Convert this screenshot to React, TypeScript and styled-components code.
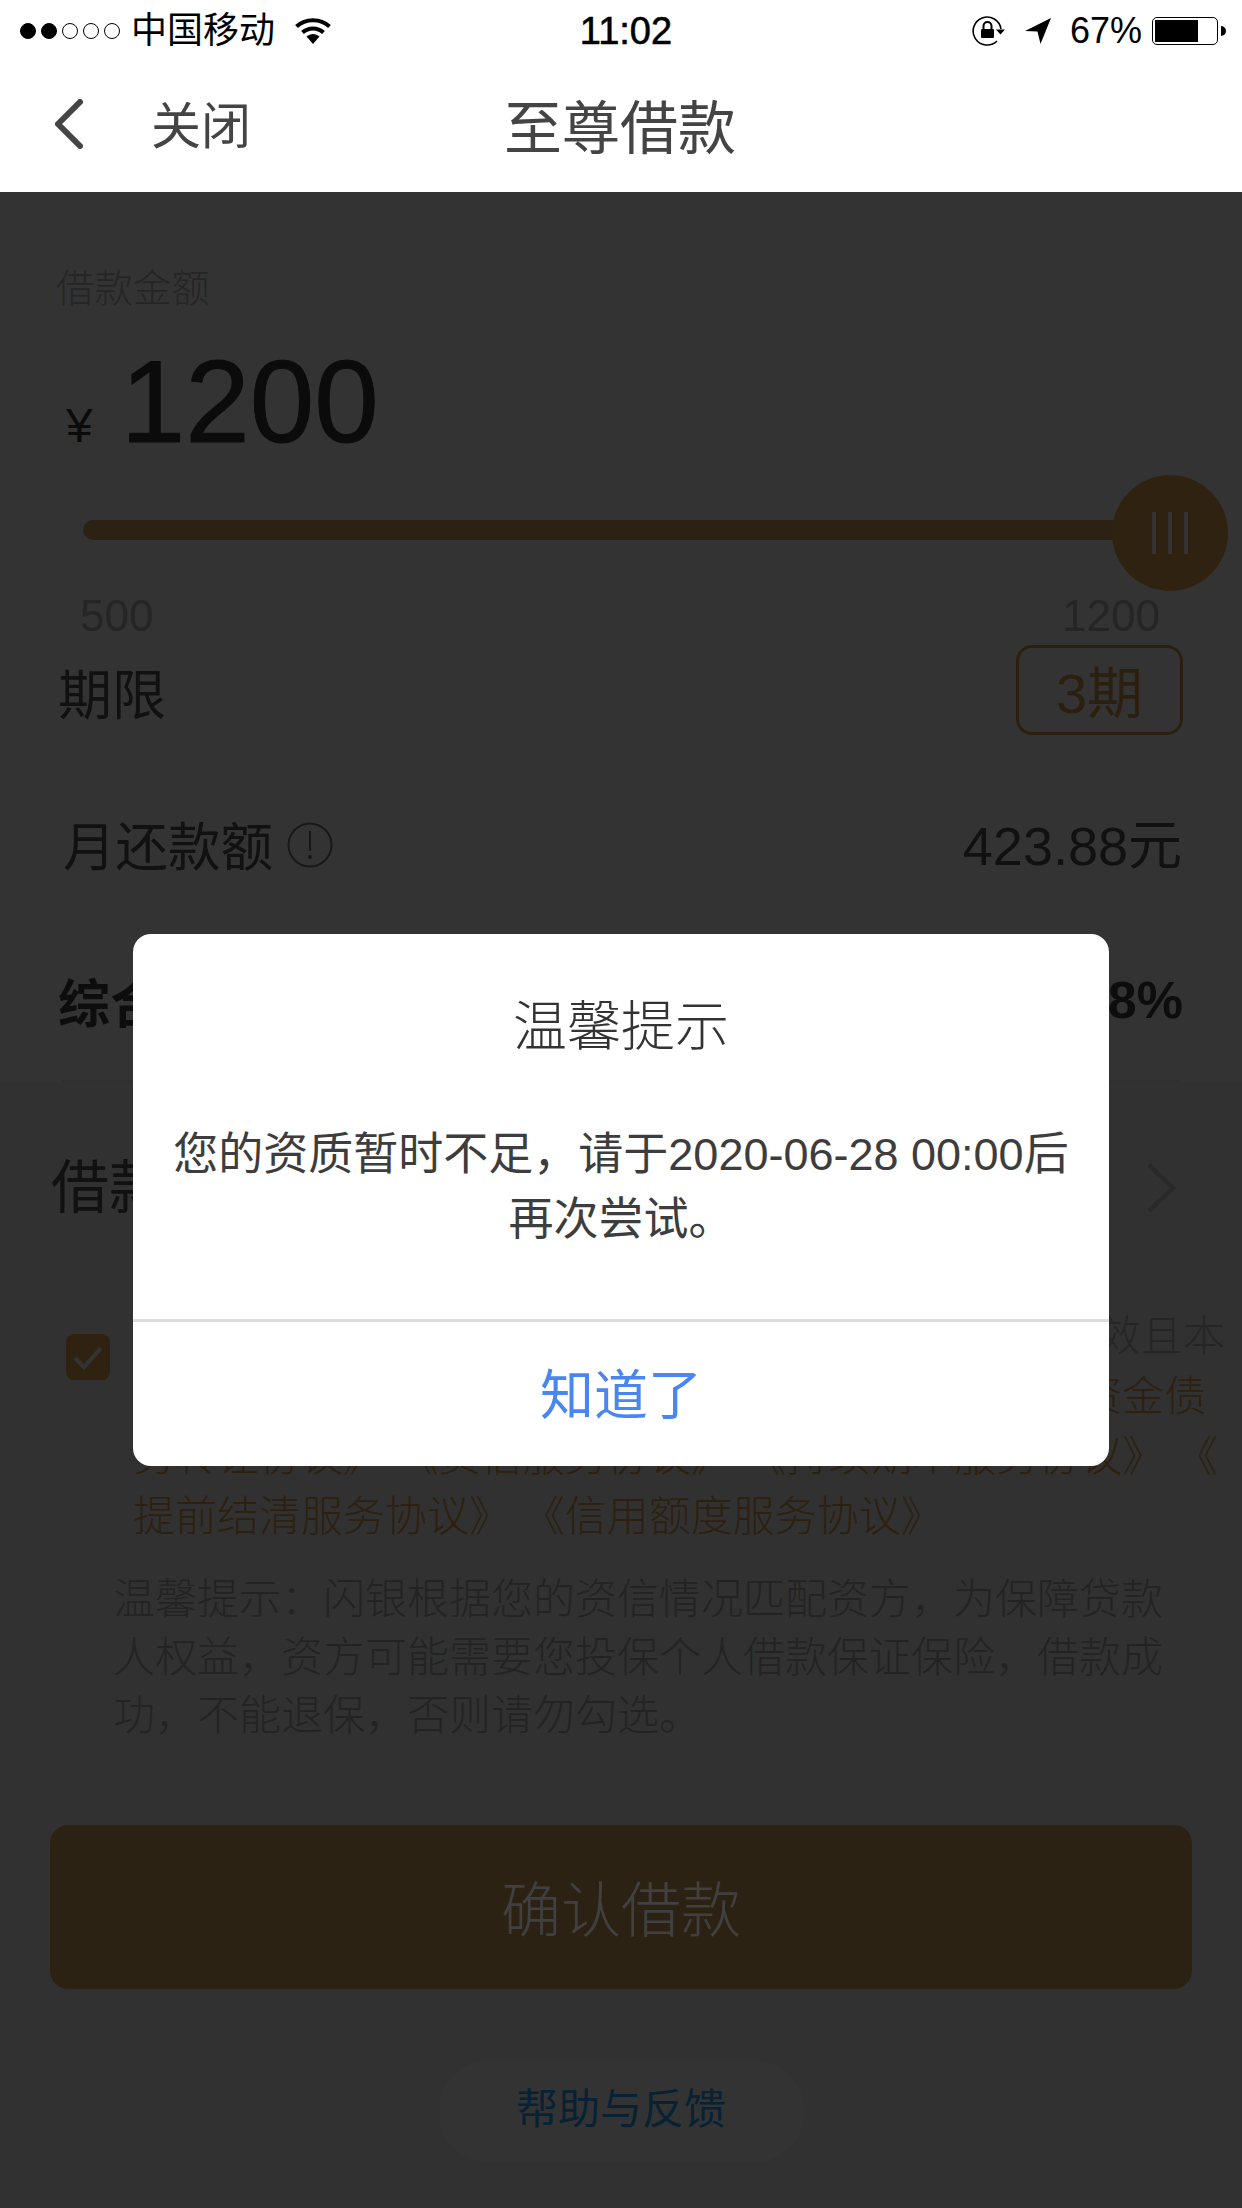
import { FC } from "react";
import styled, { createGlobalStyle } from "styled-components";

const GlobalStyle = createGlobalStyle`
  html, body {
    margin: 0;
    padding: 0;
    background: #fff;
  }
  * {
    box-sizing: border-box;
  }
`;

const App: FC = () => {
  return (
    <Page lang="zh-CN">
      <GlobalStyle />
      <StatusBar>
        <StatusLeft>
          <Signal>
            <SignalDot $on />
            <SignalDot $on />
            <SignalDot />
            <SignalDot />
            <SignalDot />
          </Signal>
          <Carrier>中国移动</Carrier>
          <svg width="36" height="28" viewBox="0 0 36 28">
            <path d="M1.5 9.5C10.5 1 25.5 1 34.5 9.5" fill="none" stroke="#000" strokeWidth="4" />
            <path d="M7.5 15.5C13.5 10 22.5 10 28.5 15.5" fill="none" stroke="#000" strokeWidth="4" />
            <path d="M11.5 19.5C15.5 16 20.5 16 24.5 19.5L18 27Z" fill="#000" />
          </svg>
        </StatusLeft>
        <Clock>11:02</Clock>
        <StatusRight>
          <svg width="36" height="30" viewBox="0 0 36 30">
            <path d="M31 13A14 14 0 1 0 27 25" fill="none" stroke="#000" strokeWidth="1.6" />
            <path d="M26 13.5H35L30.5 18.5Z" fill="#000" />
            <rect x="11" y="13" width="13" height="9" rx="1" fill="#000" />
            <path d="M13.5 13V10a4 4 0 0 1 8 0V13" fill="none" stroke="#000" strokeWidth="2" />
          </svg>
          <LocationIcon width="26" height="26" viewBox="0 0 26 26">
            <path d="M26 0L15.5 26L12.5 13.5L0 13Z" fill="#000" />
          </LocationIcon>
          <Percent>67%</Percent>
          <Battery>
            <BatteryFill />
          </Battery>
          <BatteryNub />
        </StatusRight>
      </StatusBar>

      <NavBar>
        <NavLeft>
          <svg width="28" height="50" viewBox="0 0 28 50">
            <path d="M25 3L3 25L25 47" fill="none" stroke="#444" strokeWidth="6" strokeLinecap="round" strokeLinejoin="round" />
          </svg>
          <CloseText>关闭</CloseText>
        </NavLeft>
        <NavTitle>至尊借款</NavTitle>
      </NavBar>

      <Main>
        <AmountLabel>借款金额</AmountLabel>
        <AmountRow>
          <Currency>¥</Currency>
          <AmountValue>1200</AmountValue>
        </AmountRow>
        <Slider>
          <SliderTrack />
          <SliderThumb>
            <ThumbBar />
            <ThumbBar />
            <ThumbBar />
          </SliderThumb>
        </Slider>
        <SliderScale>
          <span>500</span>
          <span>1200</span>
        </SliderScale>
        <TermRow>
          <TermLabel>期限</TermLabel>
          <TermBox>3期</TermBox>
        </TermRow>
        <InfoRow>
          <InfoName>
            <InfoText>月还款额</InfoText>
            <InfoIcon width="46" height="46" viewBox="0 0 46 46">
              <circle cx="23" cy="23" r="21.5" fill="none" stroke="#777" strokeWidth="2" />
              <path d="M23 9V29" stroke="#777" strokeWidth="2" />
              <circle cx="23" cy="35" r="2" fill="#777" />
            </InfoIcon>
          </InfoName>
          <InfoValue>423.88元</InfoValue>
        </InfoRow>
        <RateRow>
          <span>综合年化利率</span>
          <span>35.98%</span>
        </RateRow>
        <Divider />
        <LowerSection>
          <LoanRow>
            <LoanLabel>借款用途</LoanLabel>
            <svg width="30" height="50" viewBox="0 0 30 50">
              <path d="M3 2L27 25L3 48" fill="none" stroke="#ccc" strokeWidth="5" />
            </svg>
          </LoanRow>
          <Agreement>
            <CheckBox>
              <svg width="30" height="26" viewBox="0 0 30 26">
                <path d="M2 14L11 23L28 4" fill="none" stroke="#fff" strokeWidth="4" />
              </svg>
            </CheckBox>
            <AgreementText>
              <AgreementLine>本人已仔细阅读并同意以下协议，确认资料均真实有效且本</AgreementLine>
              <AgreementLine>
                人自愿接受<DocLink>《个人借款合同》 《委托担保协议》 《资金债</DocLink>
              </AgreementLine>
              <AgreementLine>
                <DocLink>务转让协议》 《资信服务协议》 《持续期本服务协议》 《</DocLink>
              </AgreementLine>
              <AgreementLine>
                <DocLink>提前结清服务协议》 《信用额度服务协议》</DocLink>
              </AgreementLine>
            </AgreementText>
          </Agreement>
          <Tip>
            温馨提示：闪银根据您的资信情况匹配资方，为保障贷款人权益，资方可能需要您投保个人借款保证保险，借款成功，不能退保，否则请勿勾选。
          </Tip>
          <ConfirmButton>
            <ConfirmLabel>确认借款</ConfirmLabel>
          </ConfirmButton>
          <HelpButton>帮助与反馈</HelpButton>
        </LowerSection>

        <Overlay>
          <Modal>
            <ModalTitle>温馨提示</ModalTitle>
            <ModalBody>
              您的资质暂时不足，请于2020-06-28 00:00后
              <br />
              再次尝试。
            </ModalBody>
            <ModalAction>知道了</ModalAction>
          </Modal>
        </Overlay>
      </Main>
    </Page>
  );
};

export default App;

const Page = styled.div`
  width: 1242px;
  height: 2208px;
  display: flex;
  flex-direction: column;
  overflow: hidden;
  font-family: "Liberation Sans", "Noto Sans CJK SC", sans-serif;
  background: #fff;
`;

const StatusBar = styled.div`
  height: 62px;
  flex: none;
  display: grid;
  grid-template-columns: 1fr auto 1fr;
  align-items: center;
  padding: 0 16px 0 20px;
  color: #000;
`;

const StatusLeft = styled.div`
  display: flex;
  align-items: center;
`;

const Signal = styled.div`
  display: flex;
  gap: 5px;
`;

const SignalDot = styled.span<{ $on?: boolean }>`
  width: 16px;
  height: 16px;
  border-radius: 50%;
  border: 1.5px solid #000;
  background: ${({ $on }) => ($on ? "#000" : "transparent")};
`;

const Carrier = styled.span`
  font-size: 36px;
  line-height: 44px;
  margin: 0 20px 0 11px;
`;

const Clock = styled.span`
  font-size: 38px;
  font-weight: 500;
  -webkit-text-stroke: 0.6px #000;
  margin-left: 6px;
`;

const StatusRight = styled.div`
  display: flex;
  align-items: center;
  justify-content: flex-end;
`;

const LocationIcon = styled.svg`
  margin-left: 19px;
`;

const Percent = styled.span`
  font-size: 36px;
  margin: 0 10px 0 19px;
`;

const Battery = styled.div`
  width: 66px;
  height: 28px;
  border: 1.5px solid #000;
  border-radius: 5px;
  padding: 2px;
`;

const BatteryFill = styled.div`
  width: 43px;
  height: 100%;
  background: #000;
`;

const BatteryNub = styled.span`
  width: 5px;
  height: 10px;
  margin-left: 3px;
  background: #000;
  border-radius: 0 5px 5px 0;
`;

const NavBar = styled.div`
  height: 130px;
  flex: none;
  position: relative;
  display: flex;
  align-items: center;
  justify-content: center;
  padding-bottom: 6px;
`;

const NavLeft = styled.div`
  position: absolute;
  left: 55px;
  top: 0;
  bottom: 6px;
  display: flex;
  align-items: center;
`;

const CloseText = styled.span`
  font-size: 50px;
  color: #444;
  margin: 0 0 4px 68px;
`;

const NavTitle = styled.div`
  font-size: 58px;
  color: #444;
  margin-left: -2px;
`;

const Main = styled.div`
  flex: 1;
  position: relative;
  background: #fff;
  display: flex;
  flex-direction: column;
`;

const AmountLabel = styled.div`
  margin: 72px 0 0 56px;
  font-size: 38.5px;
  line-height: 50px;
  font-weight: 300;
  color: #bbb;
`;

const AmountRow = styled.div`
  margin: 29px 0 0 66px;
  display: flex;
  align-items: baseline;
  height: 118px;
  line-height: 118px;
  color: #3a3a3a;
`;

const Currency = styled.span`
  font-size: 48px;
  margin-right: 28px;
`;

const AmountValue = styled.span`
  font-size: 116px;
  -webkit-text-stroke: 1px #3a3a3a;
`;

const Slider = styled.div`
  margin: 14px 14px 0 83px;
  height: 116px;
  display: flex;
  align-items: flex-start;
`;

const SliderTrack = styled.div`
  flex: 1;
  height: 20px;
  margin-top: 45px;
  background: #dca860;
  border-radius: 10px 0 0 10px;
`;

const SliderThumb = styled.div`
  width: 116px;
  height: 116px;
  flex: none;
  margin-left: -2px;
  border-radius: 50%;
  background: #e8ac50;
  display: flex;
  align-items: center;
  justify-content: center;
  gap: 12px;
`;

const ThumbBar = styled.span`
  width: 4px;
  height: 42px;
  background: #fff;
`;

const SliderScale = styled.div`
  display: flex;
  justify-content: space-between;
  padding: 0 82px 0 80px;
  font-size: 44px;
  line-height: 50px;
  color: #b8b8b8;
`;

const TermRow = styled.div`
  margin-top: 4px;
  padding: 0 59px 0 58px;
  display: flex;
  align-items: center;
  justify-content: space-between;
`;

const TermLabel = styled.span`
  margin-top: 3px;
  font-size: 54px;
  color: #555;
`;

const TermBox = styled.div`
  width: 167px;
  height: 90px;
  padding-bottom: 4px;
  border: 3px solid #d8a050;
  border-radius: 16px;
  display: flex;
  align-items: center;
  justify-content: center;
  font-size: 56px;
  color: #d8a050;
`;

const InfoRow = styled.div`
  margin-top: 70px;
  height: 80px;
  padding: 0 60px 0 63px;
  display: flex;
  align-items: center;
  justify-content: space-between;
`;

const InfoName = styled.span`
  display: flex;
  align-items: center;
`;

const InfoText = styled.span`
  font-size: 52.5px;
  color: #555;
  padding-bottom: 4px;
`;

const InfoIcon = styled.svg`
  margin-left: 14px;
`;

const InfoValue = styled.span`
  font-size: 54px;
  color: #555;
  padding-bottom: 8px;
`;

const RateRow = styled.div`
  margin-top: 75px;
  height: 80px;
  padding: 0 59px 0 58px;
  display: flex;
  align-items: center;
  justify-content: space-between;
  font-size: 52px;
  font-weight: 700;
  color: #444;
`;

const Divider = styled.div`
  margin: 40px 62px 0;
  height: 2px;
  background: #e8e8e8;
`;

const LowerSection = styled.div`
  flex: 1;
  display: flex;
  flex-direction: column;
  padding-top: 56px;
  background: #f6f6f6;
`;

const LoanRow = styled.div`
  height: 100px;
  padding: 0 66px 0 51px;
  display: flex;
  align-items: center;
  justify-content: space-between;
`;

const LoanLabel = styled.span`
  font-size: 58px;
  color: #555;
  padding-bottom: 10px;
`;

const Agreement = styled.div`
  margin-top: 69px;
  padding-left: 66px;
  display: flex;
  align-items: flex-start;
`;

const CheckBox = styled.div`
  width: 44px;
  height: 46px;
  flex: none;
  margin: 27px 23px 0 0;
  border-radius: 8px;
  background: #e8ac50;
  display: flex;
  align-items: center;
  justify-content: center;
`;

const AgreementText = styled.div`
  font-size: 42px;
  line-height: 60px;
  font-weight: 300;
  color: #bbb;
`;

const AgreementLine = styled.div`
  white-space: pre;
`;

const DocLink = styled.span`
  color: #e1a050;
`;

const Tip = styled.div`
  margin: 24px 0 0 113px;
  width: 1054px;
  font-size: 42px;
  line-height: 58px;
  font-weight: 300;
  color: #b0b0b0;
`;

const ConfirmButton = styled.div`
  margin: 80px 50px 0;
  height: 164px;
  flex: none;
  padding-bottom: 4px;
  border-radius: 18px;
  background: #dca862;
  display: flex;
  align-items: center;
  justify-content: center;
`;

const ConfirmLabel = styled.span`
  position: relative;
  z-index: 1;
  font-size: 60px;
  font-weight: 300;
  color: #404040;
`;

const HelpButton = styled.div`
  margin: 72px auto 0;
  width: 365px;
  height: 101px;
  flex: none;
  padding-bottom: 12px;
  border-radius: 50px;
  background: #fff;
  display: flex;
  align-items: center;
  justify-content: center;
  font-size: 42px;
  color: #28a8ff;
`;

const Overlay = styled.div`
  position: absolute;
  inset: 0;
  background: rgba(0, 0, 0, 0.8);
  display: flex;
  align-items: center;
  justify-content: center;
`;

const Modal = styled.div`
  width: 976px;
  height: 532px;
  border-radius: 18px;
  background: #fff;
  display: flex;
  flex-direction: column;
  align-items: center;
  color: #3d3d3d;
`;

const ModalTitle = styled.div`
  margin-top: 58px;
  font-size: 54px;
  line-height: 70px;
  font-weight: 300;
  color: #333;
`;

const ModalBody = styled.div`
  margin-top: 60px;
  font-size: 45px;
  line-height: 65px;
  text-align: center;
  height: 197px;
  width: 100%;
`;

const ModalAction = styled.div`
  flex: 1;
  width: 100%;
  padding-bottom: 6px;
  border-top: 3px solid #ddd;
  display: flex;
  align-items: center;
  justify-content: center;
  font-size: 54px;
  color: #4a86f0;
`;
